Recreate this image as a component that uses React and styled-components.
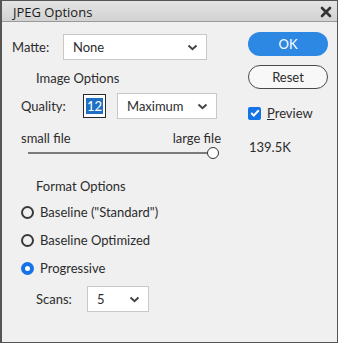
import styled, { createGlobalStyle } from "styled-components";

const GlobalStyle = createGlobalStyle`
  html, body {
    margin: 0;
    padding: 0;
    background: #f0f0f0;
  }
  * {
    box-sizing: border-box;
  }
`;

const Window = styled.div`
  width: 338px;
  height: 343px;
  border: 1px solid #555555;
  border-left-width: 2px;
  background: #f0f0f0;
  font-family: "Lato", "Open Sans", sans-serif;
  font-size: 13px;
  color: #2c2c2c;
  display: flex;
  flex-direction: column;
`;

const TitleBar = styled.div`
  height: 21px;
  flex: none;
  display: flex;
  align-items: center;
  justify-content: space-between;
  padding: 1px 5px 0 11px;
  background: linear-gradient(#e4e4e4, #d2d2d2);
  border-bottom: 1px solid #9a9a9a;
  font-family: "Open Sans", sans-serif;
  font-size: 13px;
  color: #1a1a1a;
`;

const CloseIcon = () => (
  <svg width="12" height="12" viewBox="0 0 12 12">
    <path d="M2 2 L10 10 M10 2 L2 10" stroke="#333" strokeWidth="2.6" strokeLinecap="round" />
  </svg>
);

const Body = styled.div`
  flex: 1;
  display: flex;
  justify-content: space-between;
  padding: 10px 9px 0 10px;
`;

const LeftCol = styled.div`
  width: 209px;
  display: flex;
  flex-direction: column;
`;

const RightCol = styled.div`
  width: 80px;
  display: flex;
  flex-direction: column;
  gap: 9px;
`;

const Row = styled.div`
  display: flex;
  align-items: center;
  padding-left: ${(p) => p.indent || 0}px;
  margin-top: ${(p) => p.top || 0}px;
`;

const Label = styled.span`
  width: ${(p) => p.width}px;
  flex: none;
`;

const Select = styled.div`
  width: ${(p) => p.width}px;
  height: 26px;
  flex: none;
  display: flex;
  align-items: center;
  justify-content: space-between;
  padding: 0 8px 0 9px;
  background: #ffffff;
  border: 1px solid #c8c8c8;
  font-size: 13px;
  color: #2c2c2c;
  margin-left: ${(p) => p.gap || 0}px;
`;

const Chevron = () => (
  <svg width="11" height="7" viewBox="0 0 11 7">
    <path d="M1.5 1.5 L5.5 5.2 L9.5 1.5" fill="none" stroke="#444" strokeWidth="2" />
  </svg>
);

const GroupTitle = styled.div`
  padding-left: 24px;
  margin-top: ${(p) => p.top}px;
  line-height: 16px;
`;

const NumberBox = styled.div`
  width: 23px;
  height: 24px;
  flex: none;
  border: 1px solid #2a2a2a;
  display: flex;
  align-items: center;
  justify-content: center;
  background: #ffffff;
`;

const Selected = styled.span`
  background: #1f6fc5;
  color: #ffffff;
  padding: 0 1px;
  line-height: 16px;
`;

const SliderLabels = styled.div`
  display: flex;
  justify-content: space-between;
  padding-left: 9px;
  margin-top: 11px;
  line-height: 16px;
`;

const Track = styled.div`
  position: relative;
  height: 12px;
  margin: 1px 0 0 16px;
  width: 179px;
  display: flex;
  align-items: center;
`;

const TrackLine = styled.div`
  flex: 1;
  height: 2px;
  background: #7a7a7a;
`;

const Thumb = styled.div`
  position: absolute;
  right: -12px;
  top: 0;
  width: 12px;
  height: 12px;
  border-radius: 50%;
  border: 1px solid #333333;
  background: #ffffff;
`;

const RadioList = styled.div`
  display: flex;
  flex-direction: column;
  gap: 12px;
  margin-top: 10px;
  padding-left: 9px;
`;

const RadioRow = styled.label`
  display: flex;
  align-items: center;
  gap: 6px;
  line-height: 16px;
`;

const RadioDot = styled.span`
  width: 13px;
  height: 13px;
  border-radius: 50%;
  flex: none;
  border: ${(p) => (p.checked ? "none" : "2px solid #3a3a3a")};
  background: ${(p) => (p.checked ? "#1473e6" : "transparent")};
  display: flex;
  align-items: center;
  justify-content: center;
  &::after {
    content: "";
    display: ${(p) => (p.checked ? "block" : "none")};
    width: 5px;
    height: 5px;
    border-radius: 50%;
    background: #ffffff;
  }
`;

const PillButton = styled.div`
  height: 24px;
  border-radius: 12px;
  display: flex;
  align-items: center;
  justify-content: center;
  font-size: 13px;
  background: ${(p) => (p.primary ? "#2d88e4" : "#f8f8f8")};
  color: ${(p) => (p.primary ? "#ffffff" : "#2c2c2c")};
  border: ${(p) => (p.primary ? "none" : "1px solid #4a4a4a")};
`;

const CheckRow = styled.div`
  display: flex;
  align-items: center;
  gap: 6px;
  margin-top: 7px;
`;

const CheckBox = styled.span`
  width: 13px;
  height: 13px;
  border-radius: 2px;
  background: #1473e6;
  display: flex;
  align-items: center;
  justify-content: center;
`;

const Size = styled.div`
  margin-top: 9px;
  padding-left: 1px;
`;

export default function App() {
  return (
    <>
      <GlobalStyle />
      <Window>
        <TitleBar>
          <span>JPEG Options</span>
          <CloseIcon />
        </TitleBar>
        <Body>
          <LeftCol>
            <Row top={2}>
              <Label width={51}>Matte:</Label>
              <Select width={144}>
                None
                <Chevron />
              </Select>
            </Row>
            <GroupTitle top={10}>Image Options</GroupTitle>
            <Row indent={9} top={7}>
              <Label width={62}>Quality:</Label>
              <NumberBox>
                <Selected>12</Selected>
              </NumberBox>
              <Select width={100} gap={11}>
                Maximum
                <Chevron />
              </Select>
            </Row>
            <SliderLabels>
              <span>small file</span>
              <span>large file</span>
            </SliderLabels>
            <Track>
              <TrackLine />
              <Thumb />
            </Track>
            <GroupTitle top={19}>Format Options</GroupTitle>
            <RadioList>
              <RadioRow>
                <RadioDot />
                Baseline ("Standard")
              </RadioRow>
              <RadioRow>
                <RadioDot />
                Baseline Optimized
              </RadioRow>
              <RadioRow>
                <RadioDot checked />
                Progressive
              </RadioRow>
            </RadioList>
            <Row indent={24} top={10}>
              <Label width={51}>Scans:</Label>
              <Select width={62}>
                5
                <Chevron />
              </Select>
            </Row>
          </LeftCol>
          <RightCol>
            <PillButton primary>OK</PillButton>
            <PillButton>Reset</PillButton>
            <CheckRow>
              <CheckBox>
                <svg width="10" height="8" viewBox="0 0 10 8">
                  <path d="M1.2 4 L3.8 6.5 L8.8 1.3" fill="none" stroke="#fff" strokeWidth="2" />
                </svg>
              </CheckBox>
              <span>
                <u>P</u>review
              </span>
            </CheckRow>
            <Size>139.5K</Size>
          </RightCol>
        </Body>
      </Window>
    </>
  );
}
